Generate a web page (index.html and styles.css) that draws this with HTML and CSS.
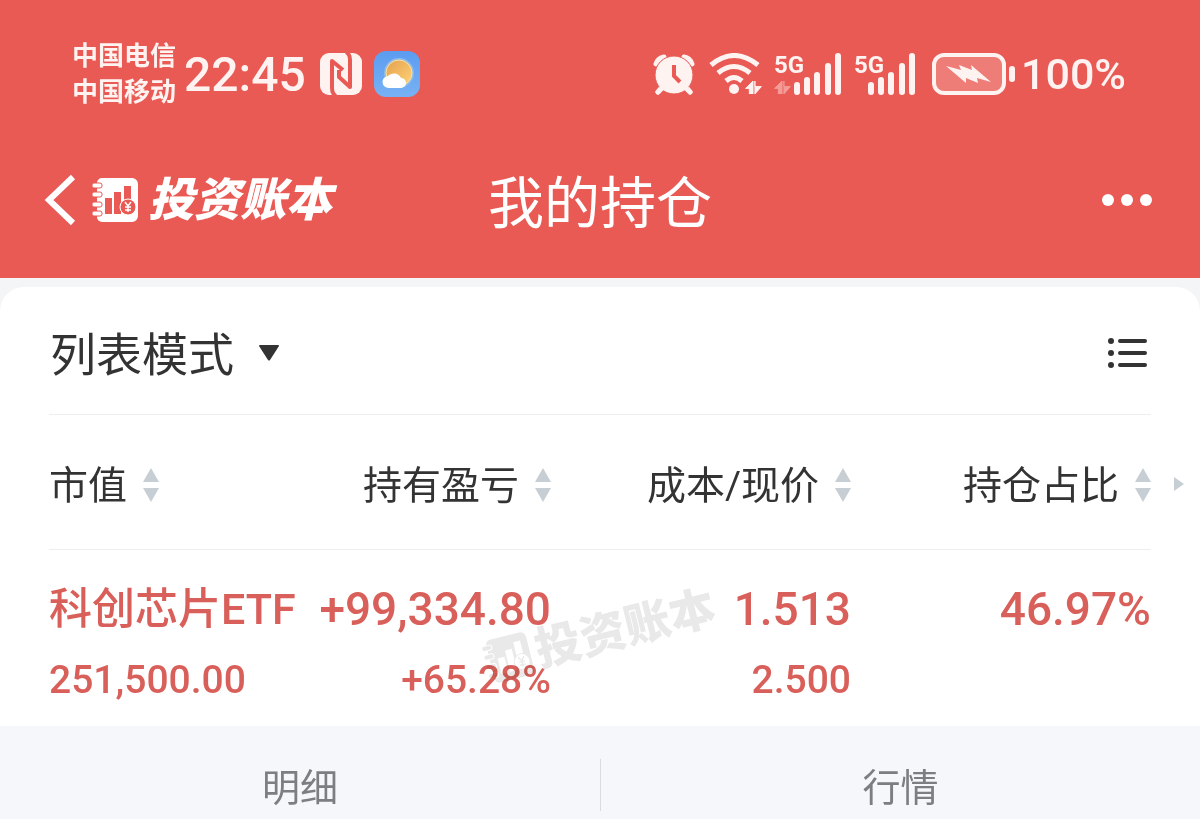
FILE: index.html
```html
<!DOCTYPE html>
<html lang="zh-CN">
<head>
  <meta charset="UTF-8">
  <meta name="viewport" content="width=device-width, initial-scale=1">
  <title>我的持仓</title>
  <link rel="stylesheet" href="styles.css">
</head>
<body>

  <!-- 图形定义 -->
  <svg class="defs" width="0" height="0" aria-hidden="true">
    <symbol id="sort" viewBox="0 0 16 34">
      <path d="M8 0 16 14H0zM0 20H16L8 34z" fill="currentColor"/>
    </symbol>
    <symbol id="arrows" viewBox="0 0 17 14">
      <path d="M8 0V14H4V8H0zM10 0V6H17L10 14z" fill="currentColor" stroke="currentColor" stroke-width="1"/>
    </symbol>
    <symbol id="ledger" viewBox="0 0 46 46">
      <path fill-rule="evenodd" fill="currentColor" stroke="none" d="M10 1H40a6 6 0 0 1 6 6V39a6 6 0 0 1-6 6H10a5 5 0 0 1-5-5V6a5 5 0 0 1 5-5zM13 21V37H20V21zM22 15V37H29V15zM32 9V24a8 8 0 0 1 7 0V9z"/>
      <g fill="currentColor" stroke-width="1">
        <rect x="0" y="6" width="10" height="5" rx="2"/>
        <rect x="0" y="15" width="10" height="5" rx="2"/>
        <rect x="0" y="25" width="10" height="5" rx="2"/>
        <rect x="0" y="34" width="10" height="5" rx="2"/>
      </g>
      <circle cx="36" cy="30" r="8" stroke="currentColor" stroke-width="1"/>
      <path d="M33 25 36 29 39 25M36 29V35M33 30H39M33 33H39" fill="none" stroke="currentColor" stroke-width="1.4"/>
    </symbol>
  </svg>

  <header class="header">
    <div class="status-bar">
      <div class="carriers">
        <span>中国电信</span>
        <span>中国移动</span>
      </div>
      <span class="clock">22:45</span>
      <svg class="nfc" width="42" height="42" viewBox="0 0 42 42">
        <rect width="42" height="42" rx="9" fill="#fff3f1"/>
        <path d="M16 43Q12 41 12 35V8L23 17M26-1Q30 1 30 7V34L19 24V17" fill="none" stroke="#e95a54" stroke-width="4" stroke-linejoin="round"/>
      </svg>
      <svg class="weather" width="46" height="46" viewBox="0 0 46 46">
        <defs>
          <linearGradient id="sky" x2="0" y2="1"><stop stop-color="#5b9cf0"/><stop offset="1" stop-color="#78b2f5"/></linearGradient>
          <linearGradient id="sun" x1="0" x2="1" y2="1"><stop stop-color="#e5a04d"/><stop offset="1" stop-color="#ffd478"/></linearGradient>
        </defs>
        <rect width="46" height="46" rx="12" fill="url(#sky)"/>
        <circle cx="25" cy="22" r="15" fill="#8fbbe6"/>
        <circle cx="25" cy="22" r="13" fill="url(#sun)" stroke="#f8e2a8" stroke-width="1"/>
        <path d="M15 37a6 6 0 0 1-1-12 8 8 0 0 1 13 2 5 5 0 0 1 0 10z" fill="#fff"/>
      </svg>

      <svg class="alarm" width="42" height="42" viewBox="0 0 42 42">
        <path d="M3 11Q5 5 11 4M31 4Q37 5 39 11M9 34 5 39M33 34 37 39" fill="none" stroke="#fff3f1" stroke-width="5" stroke-linecap="round"/>
        <circle cx="21" cy="22" r="19" fill="#fff3f1" stroke="#e95a54" stroke-width="1"/>
        <path d="M9 35 5 39M33 35 37 39" stroke="#fff3f1" stroke-width="5" stroke-linecap="round"/>
        <path d="M21 12V23L27 29" fill="none" stroke="#e95a54" stroke-width="4"/>
      </svg>
      <svg class="wifi" width="53" height="42" viewBox="0 0 53 42">
        <path d="M2 12Q25-7 49 12M9 20Q25 7 41 20M17 28Q25 21 33 28" fill="none" stroke="#fff3f1" stroke-width="5"/>
        <circle cx="25" cy="36" r="5" fill="#fff3f1"/>
        <use href="#arrows" x="36" y="28" width="17" height="13" color="#fff3f1"/>
      </svg>
      <svg class="signal" width="68" height="42" viewBox="0 0 68 42">
        <text x="0" y="20" class="net">5G</text>
        <use href="#arrows" x="0" y="28" width="17" height="13" color="#f49c98"/>
        <path d="M23 32V39M33 27V39M43 22V39M54 13V39M64 3V39" stroke="#fff3f1" stroke-width="6" stroke-linecap="round"/>
      </svg>
      <svg class="signal" width="62" height="42" viewBox="0 0 62 42">
        <text x="0" y="20" class="net">5G</text>
        <path d="M17 32V39M27 27V39M37 22V39M48 13V39M58 3V39" stroke="#fff3f1" stroke-width="6" stroke-linecap="round"/>
      </svg>
      <svg class="battery" width="83" height="42" viewBox="0 0 83 42">
        <rect x="2" y="2" width="70" height="38" rx="10" fill="#ee7d78" stroke="#fff3f1" stroke-width="4"/>
        <rect x="77" y="13" width="6" height="16" rx="3" fill="#fff3f1"/>
        <path d="M14 13 29 17 27 12 40 17 39 12 59 29 45 25 46 30 34 25 34 30z" fill="#fff3f1"/>
      </svg>
      <span class="percent">100%</span>
    </div>

    <nav class="nav-bar">
      <div class="nav-left">
        <button class="icon-button" type="button" aria-label="返回">
          <svg width="32" height="52" viewBox="0 0 32 52"><path d="M29 3 5 26 29 49" fill="none" stroke="#fff" stroke-width="6"/></svg>
        </button>
        <a class="brand" href="#">
          <svg class="brand-icon" width="46" height="46"><use href="#ledger"/></svg>
          <span>投资账本</span>
        </a>
      </div>
      <h1>我的持仓</h1>
      <button class="icon-button more" type="button" aria-label="更多">
        <svg width="50" height="14" viewBox="0 0 50 14" fill="#fff"><circle cx="6" cy="7" r="6"/><circle cx="25" cy="7" r="6"/><circle cx="44" cy="7" r="6"/></svg>
      </button>
    </nav>
  </header>

  <main class="card">
    <div class="toolbar">
      <label class="mode">
        <select aria-label="显示模式">
          <option>列表模式</option>
        </select>
        <svg width="22" height="18" viewBox="0 0 22 18"><path d="M2 1H20Q21 1 21 2L12 16Q11 17 10 16L1 2Q1 1 2 1z" fill="#333"/></svg>
      </label>
      <button class="icon-button" type="button" aria-label="列表">
        <svg width="40" height="32" viewBox="0 0 40 32">
          <path d="M12 4H37M12 16H37M12 28H37" stroke="#333" stroke-width="4" stroke-linecap="round"/>
          <g fill="#333"><circle cx="3" cy="4" r="3"/><circle cx="3" cy="16" r="3"/><circle cx="3" cy="28" r="3"/></g>
        </svg>
      </button>
    </div>

    <div class="holdings-wrap">
      <table class="holdings">
        <thead>
          <tr>
            <th><button type="button">市值<svg width="16" height="34"><use href="#sort"/></svg></button></th>
            <th><button type="button">持有盈亏<svg width="16" height="34"><use href="#sort"/></svg></button></th>
            <th class="wide"><button type="button">成本/现价<svg width="16" height="34"><use href="#sort"/></svg></button></th>
            <th class="wide"><button type="button">持仓占比<svg width="16" height="34"><use href="#sort"/></svg></button></th>
          </tr>
        </thead>
        <tbody>
          <tr>
            <td><span class="name">科创芯片ETF</span><span class="sub">251,500.00</span></td>
            <td><span class="main">+99,334.80</span><span class="sub">+65.28%</span></td>
            <td><span class="main">1.513</span><span class="sub">2.500</span></td>
            <td><span class="main">46.97%</span></td>
          </tr>
        </tbody>
      </table>
      <svg class="scroll-hint" width="10" height="14" viewBox="0 0 10 14"><path d="M0 0 10 7 0 14z" fill="#c8cfd4"/></svg>
      <div class="watermark" aria-hidden="true">
        <svg width="46" height="46"><use href="#ledger"/></svg>
        <span>投资账本</span>
      </div>
    </div>

    <div class="actions">
      <button type="button">明细</button>
      <button type="button">行情</button>
    </div>
  </main>

</body>
</html>
```
FILE: styles.css
```css
* {
  box-sizing: border-box;
}
body {
  margin: 0;
  font-family: Roboto, "Noto Sans CJK SC", sans-serif;
  background-color: #f4f5f7;
  color: #333;
}
svg {
  display: block;
  flex-shrink: 0;
}
.defs {
  position: absolute;
}
button {
  border: none;
  padding: 0;
  background: none;
  color: inherit;
  font: inherit;
  cursor: pointer;
}

/* 顶部 */
.header {
  padding-bottom: 26px;
  background-color: #e95a54;
  color: #fff;
}
.status-bar {
  display: flex;
  align-items: center;
  height: 148px;
  padding: 0 74px 0 72px;
  color: #fff3f1;
}
.carriers {
  display: flex;
  flex-direction: column;
  font-size: 26px;
  line-height: 36px;
  font-weight: 700;
}
.clock {
  margin-left: 8px;
  font-size: 48px;
  font-weight: 500;
}
.nfc {
  margin-left: 14px;
}
.weather {
  margin-left: 12px;
}
.alarm {
  margin-left: auto;
}
.wifi {
  margin-left: 14px;
}
.signal {
  margin-left: 12px;
  overflow: visible;
}
.net {
  font-size: 24px;
  font-weight: 700;
  fill: #fff3f1;
}
.battery {
  margin-left: 16px;
}
.percent {
  margin-left: 6px;
  font-size: 43px;
  font-weight: 500;
}
.nav-bar {
  display: grid;
  grid-template-columns: 1fr auto 1fr;
  align-items: center;
  height: 104px;
  padding: 0 48px 0 44px;
}
.nav-left {
  display: flex;
  align-items: center;
  gap: 16px;
}
.brand {
  display: flex;
  align-items: center;
  gap: 10px;
  color: #fff;
  font-size: 46px;
  line-height: 52px;
  font-weight: 900;
  font-style: italic;
  text-decoration: none;
}
.brand-icon {
  stroke: #e95a54;
  fill: #e95a54;
}
.nav-bar h1 {
  margin: 0;
  padding: 8px 0 0 4px;
  font-size: 56px;
  line-height: 72px;
  font-weight: 400;
}
.more {
  justify-self: end;
}

/* 持仓卡片 */
.card {
  margin-top: 9px;
  background-color: #fff;
  border-radius: 24px 24px 0 0;
}
.toolbar {
  display: flex;
  align-items: center;
  justify-content: space-between;
  height: 128px;
  margin: 0 49px;
  padding: 4px 3px 0 1px;
  border-bottom: 1px solid #eee;
}
.mode {
  display: flex;
  align-items: center;
  gap: 24px;
}
.mode select {
  appearance: none;
  border: none;
  padding: 4px 0 0;
  background: none;
  color: inherit;
  font: inherit;
  font-size: 46px;
}
.holdings-wrap {
  position: relative;
  padding: 0 49px;
}
.holdings {
  width: 100%;
  table-layout: fixed;
  border-collapse: collapse;
  text-align: right;
  white-space: nowrap;
}
.holdings .wide {
  width: 25vw;
}
.holdings th {
  height: 134px;
  padding: 0;
  border-bottom: 1px solid #eee;
  font-size: 39px;
  font-weight: 400;
  text-align: right;
}
.holdings th button {
  display: inline-flex;
  align-items: center;
  gap: 16px;
}
.holdings th svg {
  margin-top: 6px;
  color: #c8cfd4;
}
.holdings td {
  height: 177px;
  padding: 24px 0 0;
  color: #d9605a;
  font-weight: 500;
  vertical-align: top;
}
.holdings th:first-child,
.holdings td:first-child {
  text-align: left;
}
.name,
.main,
.sub {
  display: block;
  line-height: 71px;
}
.name {
  font-size: 43px;
}
.main {
  font-size: 46px;
}
.sub {
  font-size: 39px;
}
.scroll-hint {
  position: absolute;
  top: 62px;
  right: 16px;
}
.watermark {
  position: absolute;
  top: 194px;
  left: 50%;
  display: flex;
  align-items: center;
  gap: 6px;
  color: #e9e9e9;
  stroke: #fff;
  fill: #fff;
  font-size: 46px;
  line-height: 52px;
  font-weight: 900;
  transform: translateX(-50%) rotate(-14deg);
  mix-blend-mode: multiply;
  pointer-events: none;
}

/* 底部按钮 */
.actions {
  display: grid;
  grid-template-columns: 1fr 1fr;
  padding: 33px 0 8px;
  background-color: #f6f7fb;
}
.actions button {
  padding-top: 6px;
  color: #7c7e80;
  font-size: 38px;
  line-height: 46px;
}
.actions button + button {
  border-left: 1px solid #d9dbdf;
}
```
